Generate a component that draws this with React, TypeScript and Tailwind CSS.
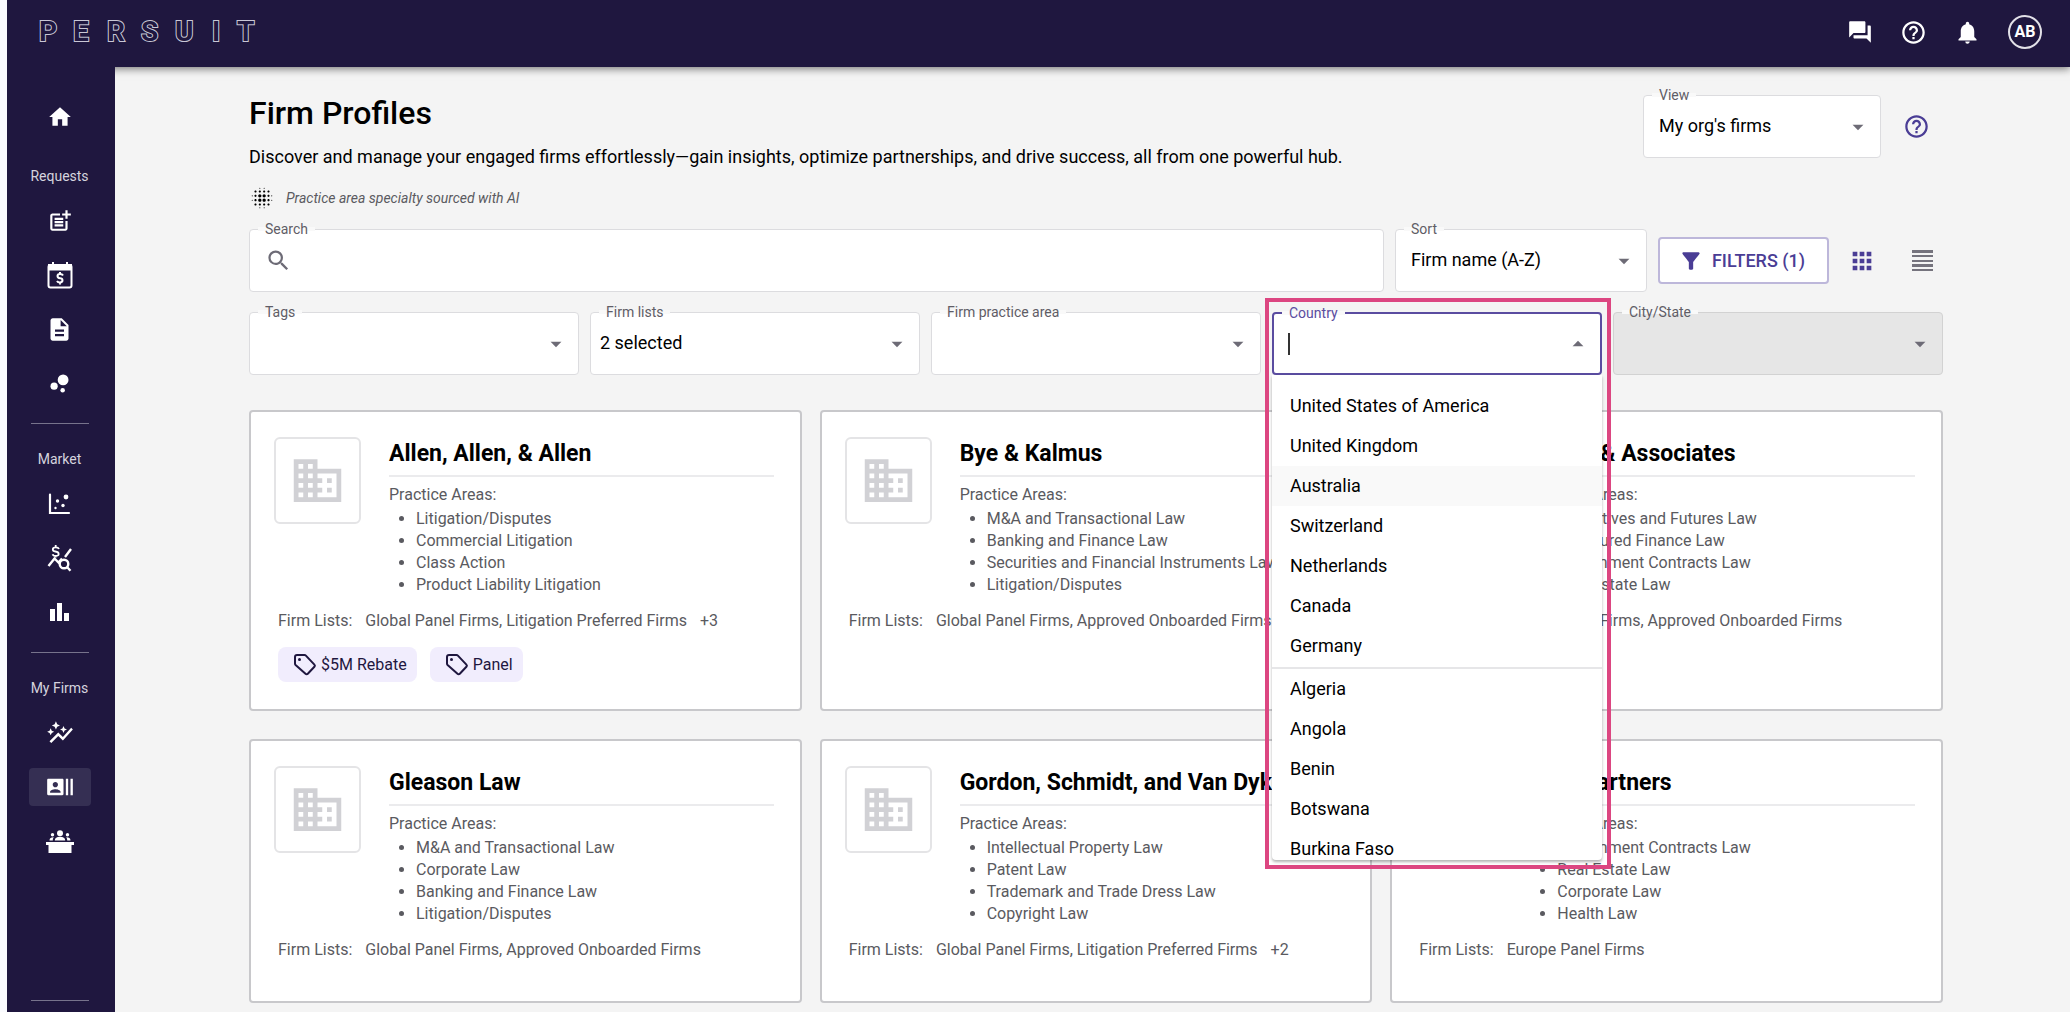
import { ReactNode } from "react";
import {
  MdApps,
  MdArrowDropDown,
  MdArrowDropUp,
  MdAutoGraph,
  MdBlurOn,
  MdBubbleChart,
  MdBusiness,
  MdDescription,
  MdFilterAlt,
  MdForum,
  MdHelpOutline,
  MdHome,
  MdNotifications,
  MdPostAdd,
  MdRecentActors,
  MdSearch,
} from "react-icons/md";

type Firm = {
  name: string;
  areas: string[];
  lists: string;
  more?: string;
  tags?: string[];
};

const firms: Firm[] = [
  {
    name: "Allen, Allen, & Allen",
    areas: ["Litigation/Disputes", "Commercial Litigation", "Class Action", "Product Liability Litigation"],
    lists: "Global Panel Firms, Litigation Preferred Firms",
    more: "+3",
    tags: ["$5M Rebate", "Panel"],
  },
  {
    name: "Bye & Kalmus",
    areas: [
      "M&A and Transactional Law",
      "Banking and Finance Law",
      "Securities and Financial Instruments Law",
      "Litigation/Disputes",
    ],
    lists: "Global Panel Firms, Approved Onboarded Firms",
  },
  {
    name: "Fisher & Associates",
    areas: [
      "Derivatives and Futures Law",
      "Structured Finance Law",
      "Government Contracts Law",
      "Real Estate Law",
    ],
    lists: "Global Panel Firms, Approved Onboarded Firms",
  },
  {
    name: "Gleason Law",
    areas: ["M&A and Transactional Law", "Corporate Law", "Banking and Finance Law", "Litigation/Disputes"],
    lists: "Global Panel Firms, Approved Onboarded Firms",
  },
  {
    name: "Gordon, Schmidt, and Van Dyke",
    areas: ["Intellectual Property Law", "Patent Law", "Trademark and Trade Dress Law", "Copyright Law"],
    lists: "Global Panel Firms, Litigation Preferred Firms",
    more: "+2",
  },
  {
    name: "Hills Partners",
    areas: ["Government Contracts Law", "Real Estate Law", "Corporate Law", "Health Law"],
    lists: "Europe Panel Firms",
  },
];

const topCountries = [
  "United States of America",
  "United Kingdom",
  "Australia",
  "Switzerland",
  "Netherlands",
  "Canada",
  "Germany",
];
const otherCountries = ["Algeria", "Angola", "Benin", "Botswana", "Burkina Faso"];

// Wordmark, drawn as outlined text
const Logo = () => (
  <svg width="230" height="48" viewBox="0 0 230 48" role="img" aria-label="Persuit">
    <g
      fill="#1f173f"
      stroke="#c9c7d6"
      strokeWidth="2"
      paintOrder="stroke"
      fontFamily="Roboto, sans-serif"
      fontWeight="700"
      fontSize="28"
    >
      {["P", "E", "R", "S", "U", "I", "T"].map((letter, i) => (
        <text key={letter} x={[0, 34, 68, 102, 136, 173, 198][i]} y="33">
          {letter}
        </text>
      ))}
    </g>
  </svg>
);

const CalendarDollarIcon = () => (
  <svg width="26" height="28" viewBox="0 0 26 28" fill="none" stroke="white" strokeWidth="2">
    <rect x="1.5" y="4" width="23" height="22.500" rx="2" />
    <path d="M2 4h22v4.500H2zM6 1v3M20 1v3" fill="white" />
    <path d="M16 14.500c-.5-1-1.500-1.500-3-1.500-3.300 0-3.300 4.200 0 4.200s3.300 4.300 0 4.300c-1.500 0-2.500-.5-3-1.500M13 11v2M13 21.500v2" />
  </svg>
);

const ScatterIcon = () => (
  <svg width="24" height="22" viewBox="0 0 24 22" fill="white">
    <path d="M2 1.500v18.500h19" fill="none" stroke="white" strokeWidth="2.2" strokeLinecap="round" />
    <circle cx="18" cy="4" r="2.400" />
    <circle cx="9.500" cy="8" r="1.700" />
    <circle cx="15" cy="12.500" r="1.700" />
    <circle cx="7.500" cy="15" r="1.200" />
  </svg>
);

const DollarStatsIcon = () => (
  <svg width="26" height="28" viewBox="0 0 26 28" fill="none" stroke="white" strokeWidth="2">
    <path d="M1.500 22l6-7.500 4 4 3.500-4M18 13l6-8" strokeWidth="2.400" />
    <path d="M12 5c-.5-1.300-1.800-1.700-3.300-1.700-3.800 0-3.800 3.700-.3 4.200 4.300.6 4.300 4.500.5 4.500-1.700 0-2.900-.6-3.300-1.800M8.700 1v2.300M8.700 12v1.500" strokeWidth="1.800" />
    <circle cx="17" cy="20" r="4.300" strokeWidth="2.400" />
    <path d="M20 23l3.500 3.800" strokeWidth="2.400" />
  </svg>
);

const BarsIcon = () => (
  <svg width="19" height="18" viewBox="0 0 19 18" fill="white">
    <path d="M0 6h5v12H0zM7 0h5v18H7zM14 10h5v8h-5z" />
  </svg>
);

const MeetingIcon = () => (
  <svg width="28" height="23" viewBox="0 0 28 23" fill="white">
    <circle cx="14" cy="3.200" r="3" />
    <path d="M8.800 10.500c0-2.500 2-3.700 5.200-3.700s5.200 1.200 5.200 3.700z" />
    <circle cx="6.500" cy="4.800" r="1.700" />
    <circle cx="21.500" cy="4.800" r="1.700" />
    <path d="M3.500 10.500c0-2.200 1.300-3.300 4.300-3.300-.8.900-1 1.800-1 3.300zM24.500 10.500c0-2.200-1.300-3.300-4.300-3.300.8.900 1 1.800 1 3.300z" />
    <path d="M0 12h28v3h-2.500v8h-23v-8H0z" />
  </svg>
);

const TagIcon = () => (
  <svg width="24" height="24" viewBox="0 0 24 24" fill="none" stroke="#1f173f" strokeWidth="2" strokeLinejoin="round">
    <path d="M2 4a2 2 0 0 1 2-2h7.500a2 2 0 0 1 1.400.6l8.500 9a1.600 1.600 0 0 1 0 2.200l-6.600 7a1.600 1.600 0 0 1-2.300 0L2.600 12a2 2 0 0 1-.6-1.400z" />
    <circle cx="6.500" cy="6.500" r="1.500" fill="#1f173f" stroke="none" />
  </svg>
);

const RowsIcon = () => (
  <svg width="21" height="22" viewBox="0 0 21 22" fill="#75737d">
    <path d="M0 0h21v3H0zM0 5h21v2H0zM0 10h21v2H0zM0 14h21v3H0zM0 19h21v2H0z" />
  </svg>
);

type NavItemProps = { label: string; active?: boolean; children: ReactNode };

const NavItem = ({ label, active, children }: NavItemProps) => (
  <a
    href="#"
    aria-label={label}
    className={`flex h-[38px] w-[62px] items-center justify-center rounded ${active ? "bg-[#352f53]" : ""}`}
  >
    {children}
  </a>
);

const NavGroup = ({ title, children }: { title: string; children: ReactNode }) => (
  <div className="flex w-full flex-col items-center gap-4">
    <p className="text-sm leading-5 text-[#d5d3de]">{title}</p>
    {children}
  </div>
);

type FieldProps = {
  label: string;
  id: string;
  className?: string;
  tone?: string;
  labelTone?: string;
  children: ReactNode;
};

// Outlined field whose label sits in a notch of the border
const Field = ({
  label,
  id,
  className = "",
  tone = "border border-[#dcdcdf] bg-white",
  labelTone = "text-[#5f5d66]",
  children,
}: FieldProps) => (
  <div className={`relative flex h-[63px] items-center rounded ${tone} ${className}`}>
    <label htmlFor={id} className={`absolute -top-[11px] left-2 px-[7px] text-sm leading-5 ${labelTone}`}>
      <span className="absolute inset-x-0 top-2 h-1 bg-[#f9f9f9]" />
      <span className="relative">{label}</span>
    </label>
    {children}
  </div>
);

type SelectFieldProps = {
  label: string;
  id: string;
  value: string;
  className?: string;
  disabled?: boolean;
  inset?: string;
};

const SelectField = ({ label, id, value, className, disabled, inset = "pl-[15px]" }: SelectFieldProps) => (
  <Field
    label={label}
    id={id}
    className={className}
    tone={disabled ? "border border-[#d2d2d2] bg-[#e6e6e6]" : undefined}
  >
    <select
      id={id}
      disabled={disabled}
      className={`h-full w-full appearance-none bg-transparent pr-10 pb-[2px] text-lg text-black opacity-100 outline-none ${inset}`}
    >
      <option>{value}</option>
    </select>
    <MdArrowDropDown size={26} className="pointer-events-none absolute right-[9px] text-[#6d6b76]" />
  </Field>
);

const FirmCard = ({ firm }: { firm: Firm }) => (
  <article className="min-h-[264px] rounded border-2 border-[#c8c8cb] bg-white pt-[25px] pr-[26px] pb-[27px] pl-[23px]">
    <div className="flex gap-7">
      <div className="flex h-[87px] w-[87px] shrink-0 items-center justify-center rounded-md border-2 border-[#e4e4e6]">
        <MdBusiness size={57} className="text-[#d1d1d5]" />
      </div>
      <div className="min-w-0 flex-1 whitespace-nowrap">
        <h2 className="border-b-2 border-[#ebebed] pb-[5px] text-[23px] leading-[33px] font-bold text-black">{firm.name}</h2>
        <p className="mt-[7px] text-base leading-[22px] text-[#5a5a60]">Practice Areas:</p>
        <ul className="mt-[2px] list-disc pl-[27px] text-base leading-[22px] text-[#5a5a60]">
          {firm.areas.map((area) => (
            <li key={area}>{area}</li>
          ))}
        </ul>
      </div>
    </div>
    <p className="mt-[14px] flex gap-[13px] pl-1 text-base leading-[22px] whitespace-nowrap text-[#5a5a60]">
      <span>Firm Lists:</span>
      <span>{firm.lists}</span>
      {firm.more && <span>{firm.more}</span>}
    </p>
    {firm.tags && (
      <div className="mt-[15px] flex gap-[13px] pl-1">
        {firm.tags.map((tag) => (
          <span
            key={tag}
            className="flex h-[35px] items-center gap-1 rounded-lg bg-[#f1edfd] pr-[10px] pl-[15px] text-base text-[#1f173f]"
          >
            <TagIcon />
            {tag}
          </span>
        ))}
      </div>
    )}
  </article>
);

const CountryField = () => (
  <div className="relative z-10">
    <div className="pointer-events-none absolute -top-[14px] -right-[9px] -left-[7px] z-10 h-[571px] border-4 border-[#dc4681]" />
    <Field label="Country" id="country" tone="border-2 border-[#5a4ca0] bg-white" labelTone="text-[#5a4ca0]">
      <span className="absolute left-[14px] h-[22px] w-[2px] bg-[#333333]" />
      <input
        id="country"
        role="combobox"
        aria-expanded="true"
        aria-controls="country-list"
        className="h-full w-full bg-transparent pl-[14px] text-lg text-black caret-transparent outline-none"
      />
      <MdArrowDropUp size={26} className="pointer-events-none absolute right-[9px] text-[#6d6b76]" />
    </Field>
    <ul
      id="country-list"
      role="listbox"
      className="absolute inset-x-0 top-full h-[485px] overflow-hidden rounded-b bg-white pt-[11px] text-lg text-black shadow-[0_2px_3px_rgba(0,0,0,0.3)]"
    >
      {topCountries.map((country) => (
        <li
          key={country}
          role="option"
          aria-selected={country === "Australia"}
          className={`flex h-10 items-center px-[18px] ${country === "Australia" ? "bg-[#f9f9f9]" : ""}`}
        >
          {country}
        </li>
      ))}
      <li role="separator" className="mt-px border-b-2 border-[#e6e6e8]" />
      {otherCountries.map((country) => (
        <li key={country} role="option" aria-selected={false} className="flex h-10 items-center px-[18px]">
          {country}
        </li>
      ))}
    </ul>
  </div>
);

const App = () => {
  return (
    <div className="flex h-screen flex-col overflow-hidden border-l-[7px] border-[#fafbfe] bg-[#f4f4f4] font-[Roboto,sans-serif]">
      <header className="z-20 flex h-[67px] shrink-0 items-center justify-between bg-[#1f173f] pr-7 pb-[3px] pl-8 text-white shadow-[0_2px_8px_rgba(0,0,0,0.5)]">
        <Logo />
        <div className="flex items-center gap-[27px]">
          <button aria-label="Messages"><MdForum size={26} /></button>
          <button aria-label="Help"><MdHelpOutline size={27} /></button>
          <button aria-label="Notifications"><MdNotifications size={27} /></button>
          <button className="flex h-[34px] w-[34px] items-center justify-center rounded-full border-2 border-[#e2e1e8] text-base font-bold">
            AB
          </button>
        </div>
      </header>

      <div className="flex min-h-0 flex-1">
        <nav className="z-20 flex w-[108px] shrink-0 flex-col items-center bg-[#1f173f] pt-[31px] pr-[3px] text-white">
          <NavItem label="Home"><MdHome size={26} /></NavItem>
          <div className="mt-[30px] flex w-full flex-col items-center">
            <NavGroup title="Requests">
              <NavItem label="New request"><MdPostAdd size={26} /></NavItem>
              <NavItem label="Billing calendar"><CalendarDollarIcon /></NavItem>
              <NavItem label="Documents"><MdDescription size={27} /></NavItem>
              <NavItem label="Bubbles"><MdBubbleChart size={27} /></NavItem>
            </NavGroup>
            <hr className="mt-[21px] mb-[25px] w-[58px] border-[#77738c]" />
            <NavGroup title="Market">
              <NavItem label="Scatter"><ScatterIcon /></NavItem>
              <NavItem label="Rates"><DollarStatsIcon /></NavItem>
              <NavItem label="Reports"><BarsIcon /></NavItem>
            </NavGroup>
            <hr className="mt-[21px] mb-[25px] w-[58px] border-[#77738c]" />
            <NavGroup title="My Firms">
              <NavItem label="Insights"><MdAutoGraph size={28} /></NavItem>
              <NavItem label="Firm profiles" active><MdRecentActors size={28} /></NavItem>
              <NavItem label="Panels"><MeetingIcon /></NavItem>
            </NavGroup>
          </div>
          <hr className="mt-auto mb-[11px] w-[58px] border-[#77738c]" />
        </nav>

        <main className="min-w-0 flex-1 pt-[26px] pr-[127px] pl-[134px]">
          <div className="flex items-start justify-between">
            <div>
              <h1 className="text-[32px] leading-10 font-medium text-black">Firm Profiles</h1>
              <p className="mt-3 text-lg leading-6 text-black">
                Discover and manage your engaged firms effortlessly—gain insights, optimize partnerships, and drive success, all from one powerful hub.
              </p>
              <p className="mt-4 flex items-center gap-[11px] text-sm leading-6 text-[#5a5a60] italic">
                <MdBlurOn size={26} className="text-black" />
                Practice area specialty sourced with AI
              </p>
            </div>
            <div className="mt-[2px] flex items-center gap-[22px] pr-[13px]">
              <SelectField label="View" id="view" value="My org's firms" className="w-[238px]" />
              <button aria-label="About firm views" className="text-[#4a3d95]"><MdHelpOutline size={27} /></button>
            </div>
          </div>

          <div className="mt-[18px] flex items-center gap-[11px]">
            <Field label="Search" id="search" className="min-w-0 flex-1">
              <MdSearch size={27} className="absolute left-[15px] text-[#6d6b76]" />
              <input id="search" className="h-full w-full bg-transparent pl-12 text-lg outline-none" />
            </Field>
            <SelectField label="Sort" id="sort" value="Firm name (A-Z)" className="w-[252px]" />
            <button className="flex h-[47px] w-[171px] items-center justify-center gap-2 rounded border-2 border-[#bdb7da] bg-white pr-1 text-lg font-medium text-[#4a3d95]">
              <MdFilterAlt size={26} />
              FILTERS (1)
            </button>
            <div className="ml-2 flex items-center gap-9 pr-[10px]">
              <button aria-label="Grid view" className="text-[#4a3d95]"><MdApps size={28} /></button>
              <button aria-label="List view"><RowsIcon /></button>
            </div>
          </div>

          <div className="mt-5 grid grid-cols-5 gap-[11px]">
            <SelectField label="Tags" id="tags" value="" />
            <SelectField label="Firm lists" id="firm-lists" value="2 selected" inset="pl-[9px]" />
            <SelectField label="Firm practice area" id="practice-area" value="" />
            <CountryField />
            <SelectField label="City/State" id="city" value="" disabled />
          </div>

          <div className="mt-[35px] grid grid-cols-3 gap-x-[18px] gap-y-7">
            {firms.map((firm) => (
              <FirmCard key={firm.name} firm={firm} />
            ))}
          </div>
        </main>
      </div>
    </div>
  );
};

export default App;
